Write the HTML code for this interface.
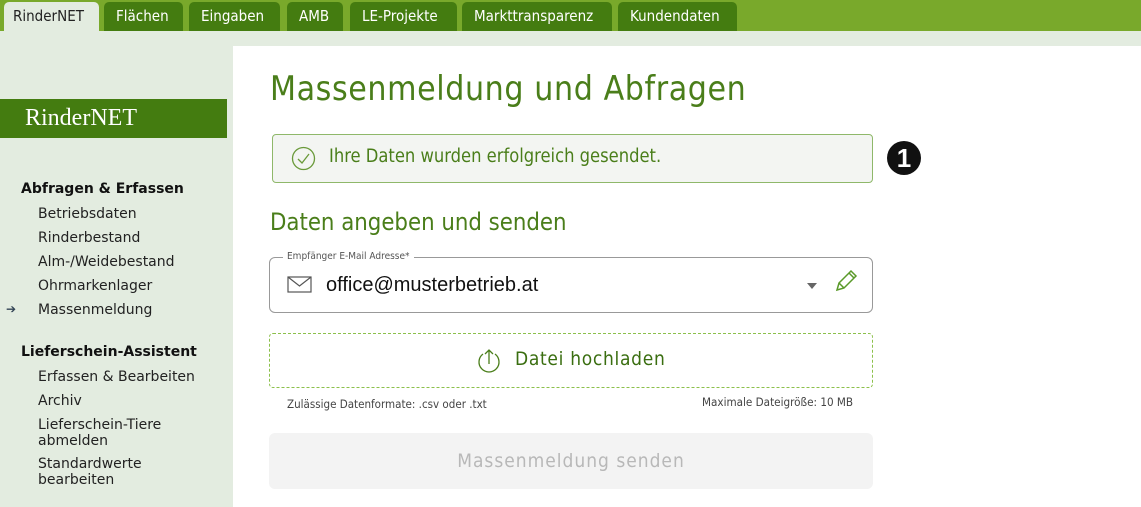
<!DOCTYPE html>
<html><head><meta charset="utf-8"><style>
*{margin:0;padding:0;box-sizing:border-box}
body{width:1141px;height:507px;overflow:hidden;background:#e3ece0;font-family:"DejaVu Sans Condensed","Liberation Sans",sans-serif;position:relative}
.top{position:absolute;left:0;top:0;width:1141px;height:31px;background:#79a92b}
.tab{position:absolute;top:2px;height:29px;background:#447c10;color:#fff;font-size:15px;line-height:29px;padding-left:12px;white-space:nowrap;border-radius:5px 5px 0 0;font-family:"DejaVu Sans Condensed",sans-serif}
.tab.a{background:#e3ece0;color:#222;height:30px;padding-left:9px}
.main{position:absolute;left:233px;top:46px;width:908px;height:461px;background:#fff}
.ban{position:absolute;left:0;top:99px;width:227px;height:39px;background:#447c10;color:#fff;font-family:"Liberation Serif",serif;font-size:24px;line-height:39px;padding-left:25px}
.side{position:absolute;left:0;font-family:"DejaVu Sans","Liberation Sans",sans-serif;font-size:14px;color:#222}
.h{font-weight:bold;left:21px;color:#111}
.i{left:38px;line-height:16px}
.f{font-family:"Liberation Sans",sans-serif}
</style></head><body>
<div class="top"></div>
<div class="tab a" style="left:4px;width:95px">RinderNET</div>
<div class="tab" style="left:104px;width:79px">Flächen</div>
<div class="tab" style="left:189px;width:91px">Eingaben</div>
<div class="tab" style="left:287px;width:56px">AMB</div>
<div class="tab" style="left:350px;width:107px">LE-Projekte</div>
<div class="tab" style="left:462px;width:150px">Markttransparenz</div>
<div class="tab" style="left:618px;width:119px">Kundendaten</div>
<div class="ban">RinderNET</div>
<div class="side h" style="top:181px">Abfragen &amp; Erfassen</div>
<div class="side i" style="top:206px">Betriebsdaten</div>
<div class="side i" style="top:230px">Rinderbestand</div>
<div class="side i" style="top:254px">Alm-/Weidebestand</div>
<div class="side i" style="top:278px">Ohrmarkenlager</div>
<div class="side" style="top:302px;left:6px;color:#345;font-size:12px">➔</div>
<div class="side i" style="top:302px">Massenmeldung</div>
<div class="side h" style="top:344px">Lieferschein-Assistent</div>
<div class="side i" style="top:369px">Erfassen &amp; Bearbeiten</div>
<div class="side i" style="top:393px">Archiv</div>
<div class="side i" style="top:417px">Lieferschein-Tiere<br>abmelden</div>
<div class="side i" style="top:456px">Standardwerte<br>bearbeiten</div>
<div class="main"></div>
<div style="position:absolute;left:270px;top:69px;font-size:33.5px;color:#4a7e1a;letter-spacing:0.6px">Massenmeldung und Abfragen</div>
<div style="position:absolute;left:272px;top:134px;width:601px;height:49px;border:1px solid #8fb86a;border-radius:4px;background:#f3f5f2"></div>
<svg style="position:absolute;left:291px;top:146px" width="25" height="25" viewBox="0 0 25 25"><circle cx="12.5" cy="12.5" r="11" fill="none" stroke="#6a9a3a" stroke-width="1.3"/><path d="M7 13l4 4 7-9" fill="none" stroke="#6a9a3a" stroke-width="1.3"/></svg>
<div style="position:absolute;left:329px;top:146px;font-size:18.2px;color:#4a7e1a">Ihre Daten wurden erfolgreich gesendet.</div>
<div style="position:absolute;left:887px;top:141px;width:34px;height:34px;border-radius:50%;background:#111;color:#fff;font:bold 26px/34px 'Liberation Sans',sans-serif;text-align:center">1</div>
<div style="position:absolute;left:270px;top:208px;font-size:23.7px;color:#4a7e1a">Daten angeben und senden</div>
<div style="position:absolute;left:269px;top:257px;width:604px;height:56px;border:1px solid #999;border-radius:6px"></div>
<div style="position:absolute;left:283px;top:251px;background:#fff;padding:0 4px;font-size:10px;color:#555">Empfänger E-Mail Adresse*</div>
<svg style="position:absolute;left:287px;top:276px" width="26" height="18" viewBox="0 0 26 18"><rect x="1" y="1" width="23" height="15" fill="none" stroke="#555" stroke-width="1.2"/><path d="M1 1l11.5 9L24 1" fill="none" stroke="#555" stroke-width="1.2"/></svg>
<div class="f" style="position:absolute;left:326px;top:274px;font-size:20px;color:#111">office@musterbetrieb.at</div>
<div style="position:absolute;left:807px;top:283px;border:5px solid transparent;border-top:6px solid #666;border-bottom:0"></div>
<svg style="position:absolute;left:833px;top:268px" width="26" height="26" viewBox="0 0 26 26"><path d="M4 22l2-7L18 3l5 5L11 20z M6 15l5 5 M16 5l5 5" fill="none" stroke="#5a9a2a" stroke-width="1.5"/></svg>
<div style="position:absolute;left:269px;top:333px;width:604px;height:55px;border:1px dashed #8cc04a;border-radius:4px"></div>
<svg style="position:absolute;left:476px;top:347px" width="26" height="26" viewBox="0 0 26 26"><path d="M7 7a10 10 0 1 0 12 0" fill="none" stroke="#4a7e1a" stroke-width="1.3"/><path d="M13 17V3M9 7l4-4 4 4" fill="none" stroke="#4a7e1a" stroke-width="1.3"/></svg>
<div style="position:absolute;left:515px;top:348px;font-size:19px;color:#3a6e10;letter-spacing:0.7px">Datei hochladen</div>
<div style="position:absolute;left:287px;top:397px;font-size:11.5px;color:#444">Zulässige Datenformate: .csv oder .txt</div>
<div style="position:absolute;left:702px;top:395px;font-size:11.6px;color:#444">Maximale Dateigröße: 10 MB</div>
<div style="position:absolute;left:269px;top:433px;width:604px;height:56px;background:#f3f3f3;border-radius:6px;color:#b8b8b8;font-size:19px;line-height:56px;text-align:center;letter-spacing:1px">Massenmeldung senden</div>
</body></html>
